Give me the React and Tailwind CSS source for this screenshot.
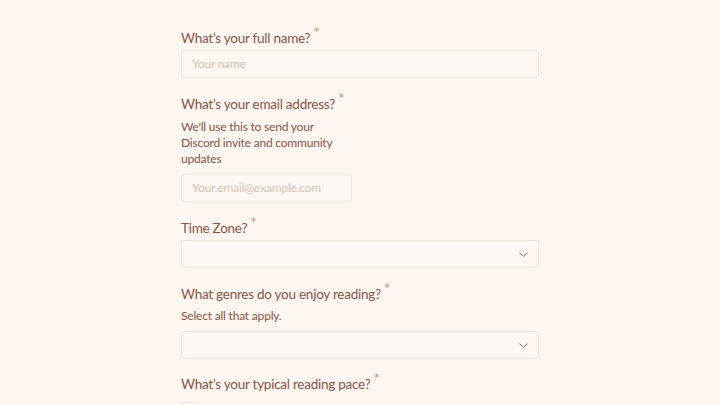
import React from "react";

const Label = ({ children }) => (
  <div className="h-[20px] text-[13.5px] leading-[20px] tracking-[-0.25px] text-[#8a5446]">
    {children}
    <span className="relative -top-[5px] ml-[3px] text-[15px] leading-none text-[#c7907f]">*</span>
  </div>
);

const Chevron = () => (
  <svg width="13" height="13" viewBox="0 0 24 24" fill="none" stroke="#9c6e60" strokeWidth="1.8" strokeLinecap="round" strokeLinejoin="round">
    <path d="M5 9l7 6 7-6" />
  </svg>
);

export default function App() {
  return (
    <div className="min-h-[405px] w-full bg-[#fdf6f1]" style={{ fontFamily: "Lato, 'Open Sans', sans-serif" }}>
      <div className="mx-auto w-[358px] pt-[28px]">
        <Label>What's your full name?</Label>
        <div className="mt-[2px] h-[28px] rounded-[3px] border border-[#f2e2d8] bg-[#fdf8f4] px-[10px] text-[12px] leading-[26px] tracking-[-0.2px] text-[#d6bfb4]">
          Your name
        </div>

        <div className="mt-[16px]">
          <Label>What's your email address?</Label>
        </div>
        <div className="mt-[5px] w-[171px] text-[12px] leading-[16px] tracking-[-0.2px] text-[#8a5446]">
          We'll use this to send your Discord invite and community updates
        </div>
        <div className="mt-[7px] h-[28px] w-[171px] rounded-[3px] border border-[#f2e2d8] bg-[#fdf8f4] px-[10px] text-[12px] leading-[26px] tracking-[-0.2px] text-[#d6bfb4]">
          Your.email@example.com
        </div>

        <div className="mt-[16px]">
          <Label>Time Zone?</Label>
        </div>
        <div className="mt-[2px] flex h-[28px] items-center justify-end rounded-[3px] border border-[#f2e2d8] bg-[#fdf8f4] pr-[8px]">
          <Chevron />
        </div>

        <div className="mt-[16px]">
          <Label>What genres do you enjoy reading?</Label>
        </div>
        <div className="mt-[4px] text-[12px] leading-[16px] tracking-[-0.2px] text-[#8a5446]">Select all that apply.</div>
        <div className="mt-[7px] flex h-[28px] items-center justify-end rounded-[3px] border border-[#f2e2d8] bg-[#fdf8f4] pr-[8px]">
          <Chevron />
        </div>

        <div className="mt-[15px]">
          <Label>What's your typical reading pace?</Label>
        </div>
        <div className="mt-[8px] h-[16px] w-[18px] rounded-[3px] border border-[#f2e2d8] bg-[#fdf8f4]" />
      </div>
    </div>
  );
}
